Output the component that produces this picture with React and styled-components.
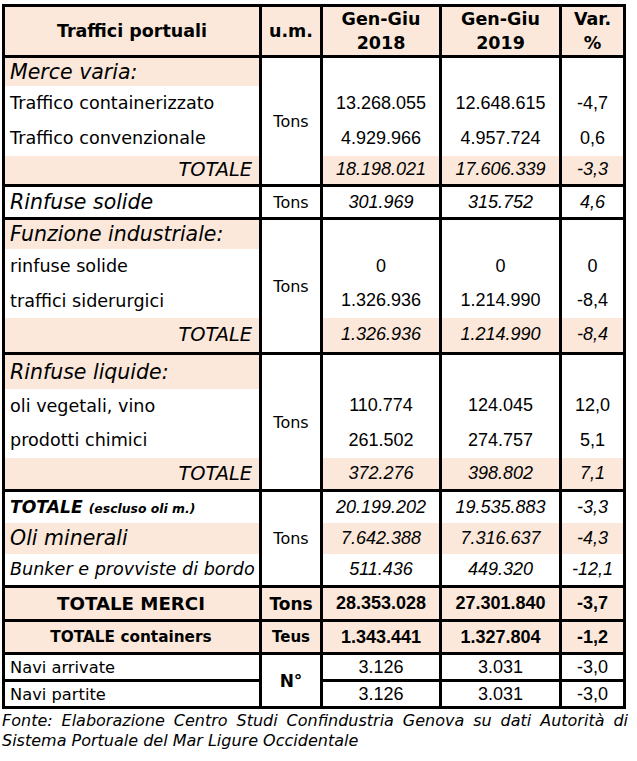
import React from "react";
import styled, { createGlobalStyle, css } from "styled-components";

const Global = createGlobalStyle`
  html, body { margin: 0; padding: 0; background: #fff; }
  body { font-family: "DejaVu Sans", "Liberation Sans", sans-serif; color: #000; }
`;

const SHADE = "#fbe8da";
const LINE = "3px solid #000";
const NUM_FONT = `"Liberation Sans", Arial, sans-serif`;

const Page = styled.div`
  padding: 4px 0 0 2px;
  width: 626px;
`;

const Table = styled.table`
  border-collapse: collapse;
  table-layout: fixed;
  width: 621px;
  border: ${LINE};
`;

const Row = styled.tr`
  height: ${(p) => p.$h}px;
  ${(p) => p.$sep && css`border-top: ${LINE};`}
`;

const HeadCell = styled.th`
  background: ${SHADE};
  border-left: ${LINE};
  border-right: ${LINE};
  font-weight: bold;
  font-size: 17.5px;
  line-height: 24px;
  text-align: center;
  vertical-align: middle;
  padding: 0;
  white-space: nowrap;
`;

const Label = styled.td`
  background: ${(p) => (p.$shade ? SHADE : "#fff")};
  border-left: ${LINE};
  border-right: ${LINE};
  padding: 0 7px 0 5px;
  vertical-align: middle;
  white-space: nowrap;
  font-size: 17.6px;
  ${(p) =>
    p.$kind === "section" &&
    css`
      font-style: italic;
      font-size: 20.5px;
    `}
  ${(p) =>
    p.$kind === "total" &&
    css`
      font-style: italic;
      font-size: 19.4px;
      text-align: right;
    `}
  ${(p) =>
    p.$kind === "italic" &&
    css`
      font-style: italic;
    `}
  ${(p) =>
    p.$kind === "grand" &&
    css`
      font-weight: bold;
      text-align: center;
      font-size: ${p.$size || 18}px;
    `}
  ${(p) =>
    p.$kind === "small" &&
    css`
      font-size: 16.3px;
    `}
`;

const Small = styled.span`
  font-size: 12.4px;
`;

const BoldItalic = styled.span`
  font-weight: bold;
  font-style: italic;
  font-size: 17.2px;
`;

const Unit = styled.td`
  background: ${(p) => (p.$shade ? SHADE : "#fff")};
  border-left: ${LINE};
  border-right: ${LINE};
  text-align: center;
  vertical-align: middle;
  padding: 0;
  font-size: ${(p) => p.$size || 16}px;
  font-weight: ${(p) => (p.$bold ? "bold" : "normal")};
`;

const Num = styled.td`
  background: ${(p) => (p.$shade ? SHADE : "#fff")};
  border-left: ${LINE};
  border-right: ${LINE};
  text-align: center;
  vertical-align: middle;
  padding: 0;
  font-family: ${NUM_FONT};
  font-size: 18px;
  font-style: ${(p) => (p.$italic ? "italic" : "normal")};
  font-weight: ${(p) => (p.$bold ? "bold" : "normal")};
`;

const Note = styled.p`
  margin: 2px 0 0 0;
  width: 626px;
  font-style: italic;
  font-size: 16px;
  line-height: 20px;
  text-align: justify;
  text-align-last: left;
`;

const Values = ({ v, shade, italic, bold }) =>
  v.map((x, i) => (
    <Num key={i} $shade={shade} $italic={italic} $bold={bold}>
      {x}
    </Num>
  ));

const Empty = () => (
  <>
    <Num />
    <Num />
    <Num />
  </>
);

const Section = ({ title, items, total, h }) => (
  <>
    <Row $h={h[0]} $sep>
      <Label $shade $kind="section">{title}</Label>
      <Unit rowSpan={items.length + 2}>Tons</Unit>
      <Empty />
    </Row>
    {items.map((it, i) => (
      <Row key={it.label} $h={h[i + 1]}>
        <Label>{it.label}</Label>
        <Values v={it.v} />
      </Row>
    ))}
    <Row $h={h[items.length + 1]}>
      <Label $shade $kind="total">TOTALE</Label>
      <Values v={total} shade italic />
    </Row>
  </>
);

export default function App() {
  return (
    <Page>
      <Global />
      <Table>
        <colgroup>
          <col style={{ width: 257 }} />
          <col style={{ width: 61 }} />
          <col style={{ width: 119 }} />
          <col style={{ width: 120 }} />
          <col style={{ width: 64 }} />
        </colgroup>
        <tbody>
          <Row $h={51}>
            <HeadCell>Traffici portuali</HeadCell>
            <HeadCell>u.m.</HeadCell>
            <HeadCell>
              Gen-Giu
              <br />
              2018
            </HeadCell>
            <HeadCell>
              Gen-Giu
              <br />
              2019
            </HeadCell>
            <HeadCell>
              Var.
              <br />%
            </HeadCell>
          </Row>

          <Section
            title="Merce varia:"
            h={[29, 35, 35, 30]}
            items={[
              { label: "Traffico containerizzato", v: ["13.268.055", "12.648.615", "-4,7"] },
              { label: "Traffico convenzionale", v: ["4.929.966", "4.957.724", "0,6"] },
            ]}
            total={["18.198.021", "17.606.339", "-3,3"]}
          />

          <Row $h={33} $sep>
            <Label $kind="section">Rinfuse solide</Label>
            <Unit>Tons</Unit>
            <Values v={["301.969", "315.752", "4,6"]} italic />
          </Row>

          <Section
            title="Funzione industriale:"
            h={[30, 35, 34, 36]}
            items={[
              { label: "rinfuse solide", v: ["0", "0", "0"] },
              { label: "traffici siderurgici", v: ["1.326.936", "1.214.990", "-8,4"] },
            ]}
            total={["1.326.936", "1.214.990", "-8,4"]}
          />

          <Section
            title="Rinfuse liquide:"
            h={[35, 34, 35, 33]}
            items={[
              { label: "oli vegetali, vino", v: ["110.774", "124.045", "12,0"] },
              { label: "prodotti chimici", v: ["261.502", "274.757", "5,1"] },
            ]}
            total={["372.276", "398.802", "7,1"]}
          />

          <Row $h={32} $sep>
            <Label>
              <BoldItalic>
                TOTALE <Small>(escluso oli m.)</Small>
              </BoldItalic>
            </Label>
            <Unit rowSpan={3}>Tons</Unit>
            <Values v={["20.199.202", "19.535.883", "-3,3"]} italic />
          </Row>
          <Row $h={31}>
            <Label $shade $kind="section">Oli minerali</Label>
            <Values v={["7.642.388", "7.316.637", "-4,3"]} shade italic />
          </Row>
          <Row $h={33}>
            <Label $kind="italic">Bunker e provviste di bordo</Label>
            <Values v={["511.436", "449.320", "-12,1"]} italic />
          </Row>

          <Row $h={34} $sep>
            <Label $shade $kind="grand" $size={18.2}>TOTALE MERCI</Label>
            <Unit $shade $bold $size={17}>Tons</Unit>
            <Values v={["28.353.028", "27.301.840", "-3,7"]} shade bold />
          </Row>
          <Row $h={33} $sep>
            <Label $shade $kind="grand" $size={15.3}>TOTALE containers</Label>
            <Unit $shade $bold $size={15}>Teus</Unit>
            <Values v={["1.343.441", "1.327.804", "-1,2"]} shade bold />
          </Row>

          <Row $h={27} $sep>
            <Label $kind="small">Navi arrivate</Label>
            <Unit rowSpan={2} $bold $size={17}>N°</Unit>
            <Values v={["3.126", "3.031", "-3,0"]} />
          </Row>
          <Row $h={27} $sep>
            <Label $kind="small">Navi partite</Label>
            <Values v={["3.126", "3.031", "-3,0"]} />
          </Row>
        </tbody>
      </Table>
      <Note>
        Fonte: Elaborazione Centro Studi Confindustria Genova su dati Autorità di Sistema Portuale
        del Mar Ligure Occidentale
      </Note>
    </Page>
  );
}
